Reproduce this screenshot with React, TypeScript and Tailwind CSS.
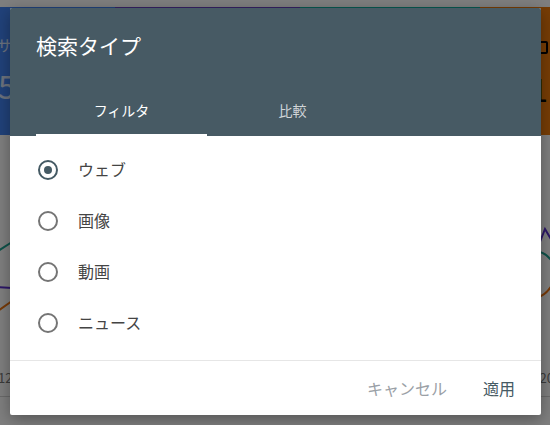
import { useState } from "react";

const jp = "font-['Noto_Sans_CJK_JP','Noto_Sans',sans-serif]";

const options = ["ウェブ", "画像", "動画", "ニュース"];

const Background = () => {
  return (
    <div className="flex h-full w-full flex-col bg-white">
      <div className="h-[7px] bg-white" />
      <div className="flex h-[128px]">
        <div className="flex w-[115px] flex-col bg-[#4285f4] pt-[28px] text-white/80">
          <span className="-ml-[3px] text-[15px] leading-[20px]">サイト</span>
          <span className="-ml-[2px] mt-[10px] text-[32px] leading-[40px]">5</span>
        </div>
        <div className="w-[185px] bg-[#6a44c4]" />
        <div className="w-[180px] bg-[#13b0a0]" />
        <div className="flex flex-1 flex-col items-end bg-[#ef7a0a] pt-[34px] pr-[2px] text-black">
          <span className="h-[13px] w-[12px] rounded-[2px] border-2 border-black" />
          <span className="mt-[14px] text-[32px] leading-[40px]">1</span>
        </div>
      </div>
      <svg width="550" height="225" viewBox="0 0 550 225" className="block">
        <polyline points="-2,116 12,107" fill="none" stroke="#1da594" strokeWidth="2" />
        <polyline points="-2,152 12,153" fill="none" stroke="#5a2fd0" strokeWidth="2" />
        <polyline points="-2,176 12,166" fill="none" stroke="#ee7410" strokeWidth="2" />
        <polyline points="538,112 545,94 552,106" fill="none" stroke="#5a2fd0" strokeWidth="2" />
        <path d="M538,117 Q545,117 552,126" fill="none" stroke="#1da594" strokeWidth="2" />
        <path d="M538,162 Q546,160 552,150" fill="none" stroke="#ee7410" strokeWidth="2" />
      </svg>
      <div className="flex h-[36px] items-center justify-between px-0 text-[13px] text-[#777]">
        <span className="-ml-[2px]">12</span>
        <span className="-mr-[4px]">20</span>
      </div>
      <div className="h-[1px] bg-[#d4d4d4]" />
    </div>
  );
};

const Radio = ({ checked }: { checked: boolean }) => {
  return (
    <span
      className={
        checked
          ? "flex h-[20px] w-[20px] items-center justify-center rounded-full border-2 border-[#455a64]"
          : "flex h-[20px] w-[20px] items-center justify-center rounded-full border-2 border-[#757575]"
      }
    >
      {checked && <span className="h-[8px] w-[8px] rounded-full bg-[#455a64]" />}
    </span>
  );
};

export default function App() {
  const [tab, setTab] = useState(0);
  const [selected, setSelected] = useState(0);

  return (
    <div className={`relative h-[425px] w-[550px] overflow-hidden ${jp}`}>
      <Background />
      <div className="absolute inset-0 bg-black/50" />
      <div className="absolute left-[10px] top-[8px] flex h-[407px] w-[531px] flex-col overflow-hidden rounded-[2px] bg-white shadow-[0_4px_16px_rgba(0,0,0,0.35)]">
        <div className="flex h-[128px] flex-col bg-[#475a64] px-[26px]">
          <h2 className="pt-[22px] text-[21px] leading-[30px] text-white">検索タイプ</h2>
          <div className="mt-auto flex h-[48px]">
            {["フィルタ", "比較"].map((t, i) => (
              <button
                key={t}
                onClick={() => setTab(i)}
                className={
                  tab === i
                    ? "relative flex w-[171px] items-center justify-center text-[14px] text-white"
                    : "relative flex w-[171px] items-center justify-center text-[14px] text-white/75"
                }
              >
                <span className="-mt-[3px]">{t}</span>
                {tab === i && <span className="absolute bottom-0 left-0 right-0 h-[2px] bg-white" />}
              </button>
            ))}
          </div>
        </div>
        <div className="flex flex-col pt-[8px] pb-[12px]">
          {options.map((o, i) => (
            <label
              key={o}
              onClick={() => setSelected(i)}
              className="flex h-[51px] cursor-pointer items-center gap-[20px] pl-[28px]"
            >
              <Radio checked={selected === i} />
              <span className="-mt-[1px] text-[16px] text-[#444]">{o}</span>
            </label>
          ))}
        </div>
        <div className="h-[1px] bg-[#e6e6e6]" />
        <div className="flex flex-1 items-center justify-end gap-[36px] pr-[26px] pb-[1px]">
          <button className="text-[16px] text-[#9aa0a6]">キャンセル</button>
          <button className="text-[16px] text-[#455a64]">適用</button>
        </div>
      </div>
    </div>
  );
}
